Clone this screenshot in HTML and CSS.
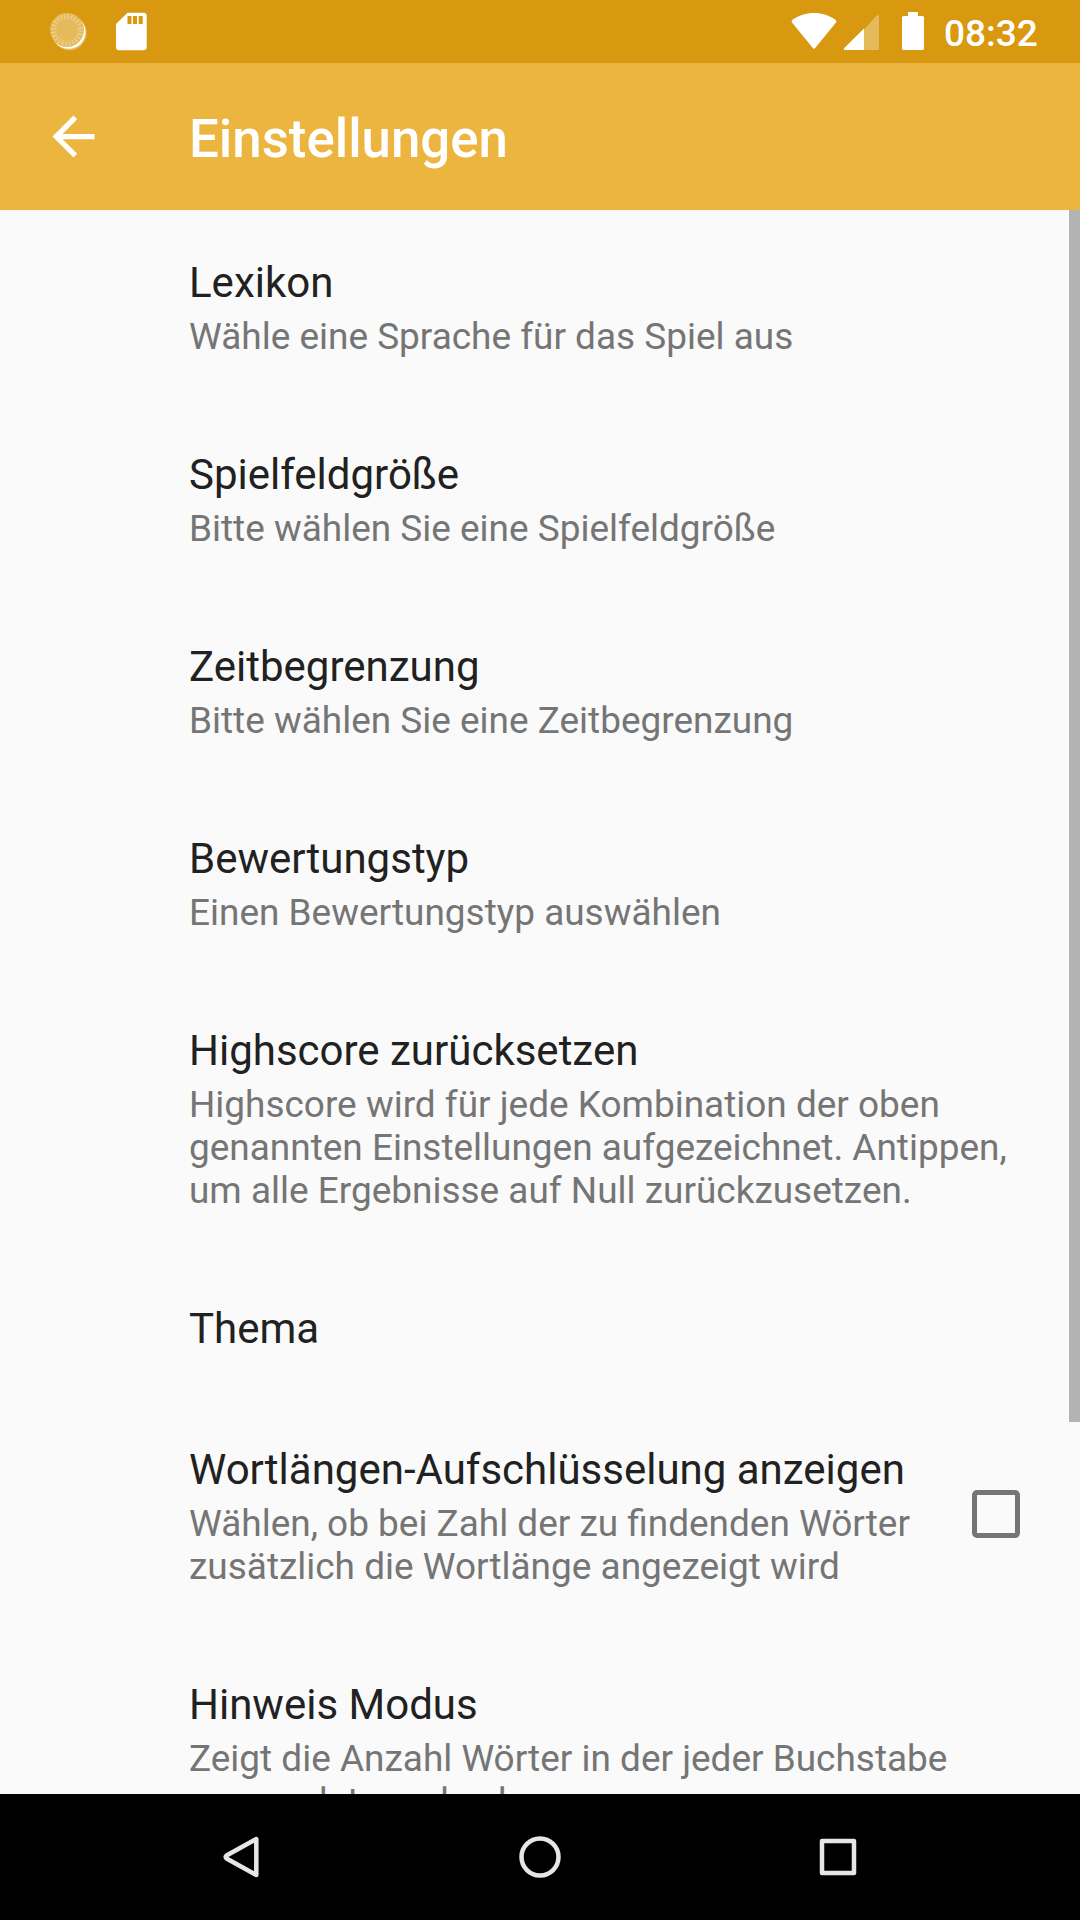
FILE: index.html
```html
<!DOCTYPE html>
<html lang="de">
<head>
<meta charset="utf-8">
<title>Einstellungen</title>
<link rel="stylesheet" href="styles.css">
</head>
<body>
<div class="screen">
  <div class="status">
    <svg class="status-icons" width="150" height="63" viewBox="0 0 150 63">
      <circle cx="69.500" cy="33" r="17.200" fill="#e4bd66"/>
      <circle cx="68.600" cy="32" r="16.800" fill="#fff"/>
      <circle cx="67" cy="30" r="17" fill="#e4ba5c"/>
      <circle cx="67" cy="30" r="13.400" fill="none" stroke="#eccf8d" stroke-width="5" stroke-dasharray="1.500 2.010"/>
      <path d="M127.500 12.700h16a3.200 3.200 0 0 1 3.200 3.200v31.200a3.200 3.200 0 0 1-3.200 3.200h-24.300a3.200 3.200 0 0 1-3.200-3.200V24z" fill="#fff"/>
      <path d="M127.500 16h4v8h-4zM133 16h4v8h-4zM138.700 16h4v8h-4z" fill="#d8980f"/>
    </svg>
    <svg class="signal-icons" width="150" height="63" viewBox="785 0 150 63">
      <path d="M792.200 20C805 10.700 823 10.700 835.800 20Q837 21 836 22.500L815.200 48q-1.200 1.500-2.400 0L792 22.500Q791 21 792.200 20z" fill="#fff"/>
      <path d="M864 29.500L876.500 15.500Q879 14 879 17V48.500a1.500 1.500 0 0 1-1.500 1.500H864z" fill="#e5ba5b"/>
      <path d="M844.300 48L864 28.500V50H845q-2-.500-.700-2z" fill="#fff"/>
      <path d="M908 12h10v4h4.500a1.500 1.500 0 0 1 1.500 1.500v31a1.500 1.500 0 0 1-1.500 1.500h-19a1.500 1.500 0 0 1-1.500-1.500v-31a1.500 1.500 0 0 1 1.500-1.500h4.500z" fill="#fff"/>
    </svg>
    <span class="clock">08:32</span>
  </div>
  <header class="bar">
    <svg class="back" width="63" height="63" viewBox="0 0 24 24"><path d="M20 11H7.830l5.590-5.590L12 4l-8 8 8 8 1.410-1.410L7.830 13H20v-2z" fill="#fff"/></svg>
    <h1 class="heading">Einstellungen</h1>
  </header>
  <main class="list">
    <section class="item"><h2 class="title">Lexikon</h2><p class="summary">Wähle eine Sprache für das Spiel aus</p></section>
    <section class="item"><h2 class="title">Spielfeldgröße</h2><p class="summary">Bitte wählen Sie eine Spielfeldgröße</p></section>
    <section class="item"><h2 class="title">Zeitbegrenzung</h2><p class="summary">Bitte wählen Sie eine Zeitbegrenzung</p></section>
    <section class="item"><h2 class="title">Bewertungstyp</h2><p class="summary">Einen Bewertungstyp auswählen</p></section>
    <section class="item"><h2 class="title">Highscore zurücksetzen</h2><p class="summary">Highscore wird für jede Kombination der oben<br>genannten Einstellungen aufgezeichnet. Antippen,<br>um alle Ergebnisse auf Null zurückzusetzen.</p></section>
    <section class="item"><h2 class="title">Thema</h2></section>
    <section class="item item-check">
      <div><h2 class="title">Wortlängen-Aufschlüsselung anzeigen</h2><p class="summary">Wählen, ob bei Zahl der zu findenden Wörter<br>zusätzlich die Wortlänge angezeigt wird</p></div>
      <span class="checkbox"></span>
    </section>
    <section class="item"><h2 class="title">Hinweis Modus</h2><p class="summary">Zeigt die Anzahl Wörter in der jeder Buchstabe<br>verwendet werden kann</p></section>
    <div class="scrollbar"></div>
  </main>
  <nav class="nav">
    <svg width="1080" height="126" viewBox="0 0 1080 126" fill="none" stroke="#e6e6e6" stroke-width="4.500" stroke-linejoin="round">
      <path d="M256.300 45V81L226.500 64.500Q225 63 226.500 61.500z"/><circle cx="540" cy="63" r="18.500"/><path d="M822 47h32v32h-32z"/>
    </svg>
  </nav>
</div>
</body>
</html>
```
FILE: styles.css
```css
body { margin: 0; font-family: Roboto, sans-serif; }
.screen { display: flex; flex-direction: column; width: 1080px; height: 1920px; overflow: hidden; background: #fafafa; }
.status { display: flex; align-items: center; flex: none; height: 63px; background: #d8980f; }
.status-icons, .signal-icons { flex: none; }
.signal-icons { margin-left: 635px; }
.clock { margin-left: 9px; padding-top: 4px; color: #fff; font-size: 37px; font-weight: 500; line-height: 44px; }
.bar { display: flex; align-items: center; flex: none; height: 147px; background: #ecb540; }
.back { margin-left: 42px; }
.heading { margin: 5px 0 0 84px; color: #fff; font-size: 52.800px; font-weight: 500; line-height: 62px; }
.list { position: relative; flex: 1; min-height: 0; overflow: hidden; }
.item { padding: 48px 48px 43px 189px; }
.title { margin: 0; color: #212121; font-size: 42px; font-weight: 400; line-height: 50px; white-space: nowrap; }
.summary { margin: 7px 0 0; padding-bottom: 1px; color: #757575; font-size: 36.960px; line-height: 43px; white-space: nowrap; }
.item-check { display: flex; justify-content: space-between; padding-right: 60px; }
.checkbox { box-sizing: border-box; flex: none; width: 48px; height: 48px; margin-top: 45px; border: 5px solid #757575; border-radius: 5px; }
.scrollbar { position: absolute; top: 0; right: 0; width: 11px; height: 1212px; background: #b3b3b3; }
.nav { flex: none; height: 126px; background: #000; }
```
